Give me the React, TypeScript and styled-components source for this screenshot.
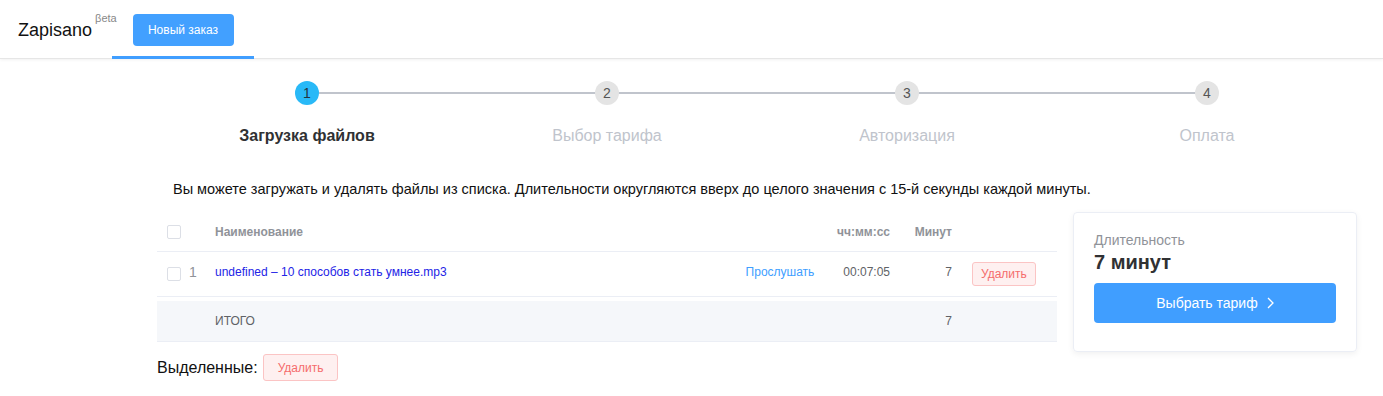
import React from "react";
import styled, { createGlobalStyle } from "styled-components";

const GlobalStyle = createGlobalStyle`
  body {
    margin: 0;
    background: #fff;
    font-family: "Liberation Sans", Arial, sans-serif;
    color: #303133;
  }
`;

const Header = styled.header`
  display: flex;
  align-items: stretch;
  height: 58px;
  padding-left: 18px;
  border-bottom: 1px solid #e6e6e6;
  box-shadow: 0 1px 3px rgba(0, 0, 0, 0.06);
`;

const Logo = styled.div`
  display: flex;
  align-items: flex-start;
  width: 94px;
  padding-top: 20px;
  font-size: 18px;
  color: #111;
  white-space: nowrap;
`;

const Beta = styled.sup`
  font-size: 11px;
  color: #888;
  margin-left: 3px;
  position: relative;
  top: -8px;
`;

const NavItem = styled.div`
  display: flex;
  align-items: flex-start;
  justify-content: center;
  width: 142px;
  padding-top: 14px;
  box-sizing: border-box;
  border-bottom: 3px solid #409eff;
  margin-bottom: -1px;
`;

const PrimaryButton = styled.button`
  background: #42a0ff;
  color: #fff;
  border: none;
  border-radius: 4px;
  font-family: inherit;
  font-size: 12px;
  height: 32px;
  width: 101px;
  padding: 0;
`;

const Main = styled.main`
  width: 1200px;
  margin-left: 157px;
`;

const Steps = styled.div`
  display: grid;
  grid-template-columns: repeat(4, 1fr);
  padding-top: 22px;
`;

const Step = styled.div`
  display: flex;
  flex-direction: column;
  align-items: center;
  position: relative;
`;

const Line = styled.div`
  position: absolute;
  top: 11px;
  left: 50%;
  width: 100%;
  height: 2px;
  background: #c0c4cc;
`;

const Circle = styled.div<{ $active?: boolean }>`
  position: relative;
  z-index: 1;
  width: 24px;
  height: 24px;
  border-radius: 50%;
  display: flex;
  align-items: center;
  justify-content: center;
  font-size: 14px;
  background: ${(p) => (p.$active ? "#29b9f7" : "#e4e4e4")};
  color: ${(p) => (p.$active ? "#24343c" : "#555")};
`;

const StepLabel = styled.div<{ $active?: boolean }>`
  margin-top: 22px;
  font-size: 16px;
  font-weight: ${(p) => (p.$active ? 700 : 400)};
  color: ${(p) => (p.$active ? "#303133" : "#c0c4cc")};
`;

const Note = styled.p`
  margin: 36px 0 0;
  padding-left: 16px;
  font-size: 14.5px;
  color: #111;
`;

const Body = styled.div`
  display: flex;
  gap: 16px;
  margin-top: 15px;
  align-items: flex-start;
`;

const Left = styled.div`
  width: 900px;
`;

const Row = styled.div<{ $height: number; $total?: boolean }>`
  display: grid;
  grid-template-columns: 58px 1fr 100px 70px 62px 95px;
  align-items: center;
  height: ${(p) => p.$height}px;
  border-bottom: 1px solid #ebeef5;
  background: ${(p) => (p.$total ? "#f5f7fa" : "#fff")};
  margin-top: ${(p) => (p.$total ? "4px" : "0")};
  font-size: 12px;
  color: #606266;
`;

const HeadCell = styled.div<{ $align?: string }>`
  font-weight: 700;
  color: #909399;
  text-align: ${(p) => p.$align || "left"};
  padding-right: ${(p) => (p.$align === "right" ? "10px" : "0")};
`;

const Cell = styled.div<{ $align?: string; $pad?: number }>`
  text-align: ${(p) => p.$align || "left"};
  padding-right: ${(p) => (p.$align === "right" ? "10px" : "0")};
  padding-left: ${(p) => p.$pad || 0}px;
`;

const CheckCell = styled.div`
  display: flex;
  align-items: center;
  padding-left: 10px;
  gap: 9px;
`;

const Check = styled.span`
  display: inline-block;
  width: 12px;
  height: 12px;
  border: 1px solid #dcdfe6;
  border-radius: 2px;
  background: #fff;
`;

const Index = styled.span`
  font-size: 14px;
  color: #909399;
  margin-top: -5px;
  margin-left: -1px;
`;

const FileLink = styled.a`
  color: #2323e6;
  text-decoration: none;
  position: relative;
  top: -2px;
`;

const Listen = styled.span`
  color: #409eff;
  display: block;
  text-align: center;
  position: relative;
  top: -2px;
`;

const Lifted = styled(Cell)`
  position: relative;
  top: -2px;
`;

const DangerButton = styled.button<{ $small?: boolean }>`
  background: #fef0f0;
  border: 1px solid #fbc4c4;
  color: #f56c6c;
  border-radius: 3px;
  font-family: inherit;
  font-size: 12px;
  height: ${(p) => (p.$small ? "24px" : "27px")};
  padding: ${(p) => (p.$small ? "0 8px" : "0 14px")};
`;

const Selected = styled.div`
  display: flex;
  align-items: center;
  gap: 5px;
  margin-top: 12px;
  font-size: 16px;
  color: #111;
`;

const Card = styled.div`
  width: 284px;
  box-sizing: border-box;
  border: 1px solid #ebeef5;
  border-radius: 4px;
  box-shadow: 0 2px 6px rgba(0, 0, 0, 0.06);
  padding: 19px 20px 28px;
`;

const CardLabel = styled.div`
  font-size: 14px;
  color: #909399;
`;

const CardValue = styled.div`
  font-size: 20px;
  font-weight: 700;
  color: #303133;
  margin-top: 3px;
`;

const WideButton = styled.button`
  width: 100%;
  height: 40px;
  margin-top: 9px;
  background: #409eff;
  color: #fff;
  border: none;
  border-radius: 4px;
  font-family: inherit;
  font-size: 14px;
  display: flex;
  align-items: center;
  justify-content: center;
  gap: 8px;
`;

const steps = ["Загрузка файлов", "Выбор тарифа", "Авторизация", "Оплата"];

export default function App() {
  return (
    <>
      <GlobalStyle />
      <Header>
        <Logo>
          Zapisano<Beta>βeta</Beta>
        </Logo>
        <NavItem>
          <PrimaryButton>Новый заказ</PrimaryButton>
        </NavItem>
      </Header>
      <Main>
        <Steps>
          {steps.map((s, i) => (
            <Step key={s}>
              {i < steps.length - 1 && <Line />}
              <Circle $active={i === 0}>{i + 1}</Circle>
              <StepLabel $active={i === 0}>{s}</StepLabel>
            </Step>
          ))}
        </Steps>
        <Note>
          Вы можете загружать и удалять файлы из списка. Длительности округляются вверх до целого
          значения с 15-й секунды каждой минуты.
        </Note>
        <Body>
          <Left>
            <Row $height={39}>
              <CheckCell>
                <Check />
              </CheckCell>
              <HeadCell>Наименование</HeadCell>
              <HeadCell />
              <HeadCell $align="right">чч:мм:сс</HeadCell>
              <HeadCell $align="right">Минут</HeadCell>
              <HeadCell />
            </Row>
            <Row $height={44}>
              <CheckCell>
                <Check />
                <Index>1</Index>
              </CheckCell>
              <Cell>
                <FileLink href="#">undefined – 10 способов стать умнее.mp3</FileLink>
              </Cell>
              <Listen>Прослушать</Listen>
              <Lifted $align="right">00:07:05</Lifted>
              <Lifted $align="right">7</Lifted>
              <Cell $pad={10}>
                <DangerButton $small>Удалить</DangerButton>
              </Cell>
            </Row>
            <Row $height={40} $total>
              <Cell />
              <Cell>ИТОГО</Cell>
              <Cell />
              <Cell />
              <Cell $align="right">7</Cell>
              <Cell />
            </Row>
            <Selected>
              Выделенные:
              <DangerButton>Удалить</DangerButton>
            </Selected>
          </Left>
          <Card>
            <CardLabel>Длительность</CardLabel>
            <CardValue>7 минут</CardValue>
            <WideButton>
              Выбрать тариф
              <svg width="8" height="12" viewBox="0 0 8 12">
                <path d="M2 1l5 5-5 5" fill="none" stroke="#fff" strokeWidth="1.3" />
              </svg>
            </WideButton>
          </Card>
        </Body>
      </Main>
    </>
  );
}
